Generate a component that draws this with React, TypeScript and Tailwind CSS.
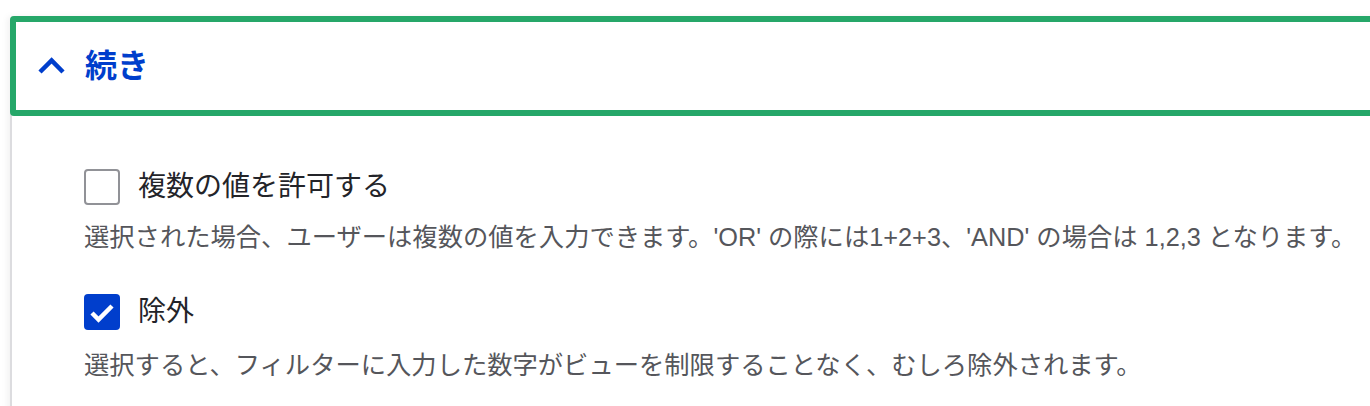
import React from "react";

const font = { fontFamily: '"Liberation Sans", "Noto Sans CJK JP", sans-serif' };

export default function App() {
  return (
    <div
      className="w-[1370px] h-[406px] overflow-hidden bg-white pt-[16px] pl-[10px]"
      style={font}
    >
      <div className="w-[1400px] h-[420px] bg-white border-l-2 border-[#dcdcdf] rounded-tl-[4px] shadow-[-3px_0_6px_rgba(0,0,0,0.05)]">
        <div className="-ml-[2px] h-[100px] border-[6px] border-[#26a769] rounded-[4px] flex items-center pl-[20px]">
          <svg width="30" height="30" viewBox="0 0 30 30" className="shrink-0">
            <path
              d="M4 21 L15.6 9.5 L27 21"
              fill="none"
              stroke="#003ecc"
              strokeWidth="4.5"
            />
          </svg>
          <span className="ml-[19px] text-[32px] leading-none font-bold text-[#003ecc]">
            続き
          </span>
        </div>

        <div className="pl-[72px]">
          <div className="mt-[53px] flex items-center h-[36px]">
            <span className="w-[36px] h-[36px] rounded-[4px] border-2 border-[#919297] bg-white shrink-0" />
            <span className="ml-[18px] text-[28px] leading-[36px] text-[#232429]">
              複数の値を許可する
            </span>
          </div>
          <p className="mt-[14px] text-[25.3px] leading-[36px] text-[#55565b] whitespace-nowrap">
            選択された場合、ユーザーは複数の値を入力できます。'OR' の際には1+2+3、'AND' の場合は 1,2,3 となります。
          </p>

          <div className="mt-[39px] flex items-center h-[36px]">
            <span className="w-[36px] h-[36px] rounded-[4px] bg-[#003ecc] shrink-0 flex items-center justify-center">
              <svg width="36" height="36" viewBox="0 0 36 36">
                <path
                  d="M8 19 L14.5 25.5 L28 12"
                  fill="none"
                  stroke="#ffffff"
                  strokeWidth="4.5"
                />
              </svg>
            </span>
            <span className="ml-[18px] text-[28px] leading-[36px] text-[#232429]">
              除外
            </span>
          </div>
          <p className="mt-[17px] text-[25.3px] leading-[36px] text-[#55565b] whitespace-nowrap">
            選択すると、フィルターに入力した数字がビューを制限することなく、むしろ除外されます。
          </p>
        </div>
      </div>
    </div>
  );
}
